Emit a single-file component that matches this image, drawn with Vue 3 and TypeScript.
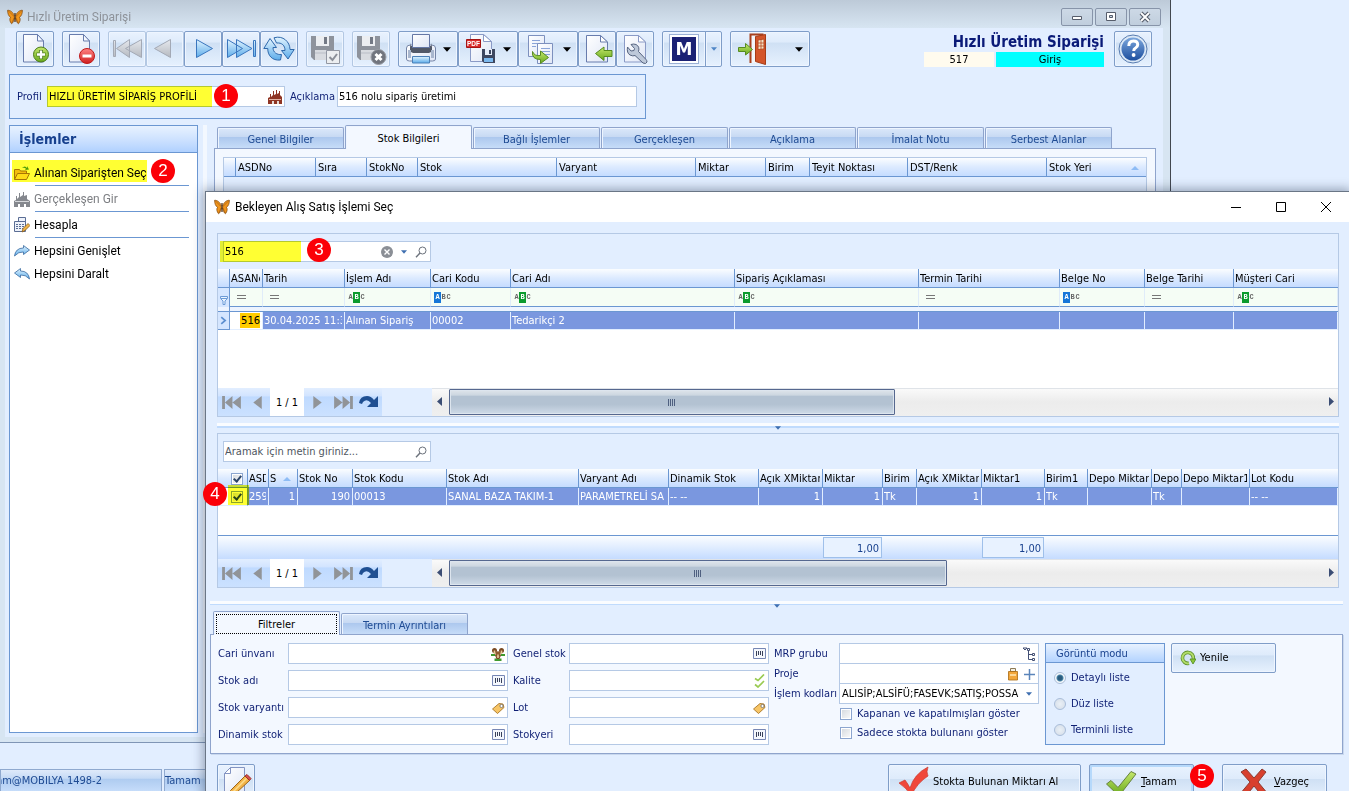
<script setup lang="ts">
import { ref } from 'vue'

interface Tool { icon: string; label: string; disabled?: boolean; menu?: boolean }
interface Column { title: string; width?: number; filter?: string; sort?: boolean }
interface Field { id: string; label: string; icon: string }

const toolGroups: Tool[][] = [
  [{ icon: 'add', label: 'Yeni' }],
  [{ icon: 'remove', label: 'Sil' }],
  [
    { icon: 'first', label: 'İlk kayıt', disabled: true },
    { icon: 'prev', label: 'Önceki kayıt', disabled: true },
    { icon: 'next', label: 'Sonraki kayıt' },
    { icon: 'last', label: 'Son kayıt' },
    { icon: 'refresh', label: 'Yenile' },
  ],
  [{ icon: 'save', label: 'Kaydet', disabled: true }],
  [{ icon: 'cancel', label: 'İptal', disabled: true }],
  [
    { icon: 'print', label: 'Yazdır', menu: true },
    { icon: 'pdf', label: 'PDF kaydet', menu: true },
    { icon: 'copy', label: 'Kopyala', menu: true },
    { icon: 'import', label: 'Aktar' },
    { icon: 'wrench', label: 'Ayarlar' },
  ],
]

const actions = [
  { icon: 'folder', label: 'Alınan Siparişten Seç', line: true, marked: true },
  { icon: 'factory-grey', label: 'Gerçekleşen Gir', line: true, disabled: true },
  { icon: 'calc', label: 'Hesapla', line: true },
  { icon: 'redo', label: 'Hepsini Genişlet' },
  { icon: 'undo', label: 'Hepsini Daralt' },
]

const mainTabs = ['Genel Bilgiler', 'Stok Bilgileri', 'Bağlı İşlemler', 'Gerçekleşen', 'Açıklama', 'İmalat Notu', 'Serbest Alanlar']
const activeTab = ref('Stok Bilgileri')

const mainColumns: Column[] = [
  { title: '', width: 12 }, { title: 'ASDNo', width: 80 }, { title: 'Sıra', width: 51 },
  { title: 'StokNo', width: 51 }, { title: 'Stok', width: 139 }, { title: 'Varyant', width: 139 },
  { title: 'Miktar', width: 70 }, { title: 'Birim', width: 44 }, { title: 'Teyit Noktası', width: 98 },
  { title: 'DST/Renk', width: 139 }, { title: 'Stok Yeri', sort: true },
]

const orderColumns: Column[] = [
  { title: 'ASANo', width: 33, filter: 'eq' }, { title: 'Tarih', width: 82, filter: 'eq' },
  { title: 'İşlem Adı', width: 86, filter: 'has' }, { title: 'Cari Kodu', width: 80, filter: 'starts' },
  { title: 'Cari Adı', width: 224, filter: 'has' }, { title: 'Sipariş Açıklaması', width: 184, filter: 'has' },
  { title: 'Termin Tarihi', width: 141, filter: 'eq' }, { title: 'Belge No', width: 85, filter: 'starts' },
  { title: 'Belge Tarihi', width: 89, filter: 'eq' }, { title: 'Müşteri Cari', filter: 'has' },
]
const orderRow = ['516', '30.04.2025 11:35', 'Alınan Sipariş', '00002', 'Tedarikçi 2', '', '', '', '', '']

const stockColumns: Column[] = [
  { title: 'ASDNo', width: 21 }, { title: 'Sıra', width: 29, sort: true }, { title: 'Stok No', width: 55 },
  { title: 'Stok Kodu', width: 94 }, { title: 'Stok Adı', width: 132 }, { title: 'Varyant Adı', width: 90 },
  { title: 'Dinamik Stok', width: 90 }, { title: 'Açık XMiktar', width: 64 }, { title: 'Miktar', width: 60 },
  { title: 'Birim', width: 34 }, { title: 'Açık XMiktar 1', width: 65 }, { title: 'Miktar1', width: 63 },
  { title: 'Birim1', width: 43 }, { title: 'Depo Miktar', width: 64 }, { title: 'Depo', width: 30 },
  { title: 'Depo Miktar1', width: 68 }, { title: 'Lot Kodu' },
]
const stockRow = ['2591', '1', '190', '00013', 'SANAL BAZA TAKIM-1', 'PARAMETRELİ SA', '-- --', '1', '1', 'Tk', '1', '1', 'Tk', '', 'Tk', '', '-- --']
const numeric = [1, 2, 7, 8, 10, 11]
const totals: Record<number, string> = { 8: '1,00', 11: '1,00' }

const leftFields: Field[] = [
  { id: 'cari', label: 'Cari ünvanı', icon: 'people' }, { id: 'stokadi', label: 'Stok adı', icon: 'barcode' },
  { id: 'varyant', label: 'Stok varyantı', icon: 'tag' }, { id: 'dinamik', label: 'Dinamik stok', icon: 'barcode' },
]
const midFields: Field[] = [
  { id: 'genel', label: 'Genel stok', icon: 'barcode' }, { id: 'kalite', label: 'Kalite', icon: 'checks' },
  { id: 'lot', label: 'Lot', icon: 'tag' }, { id: 'stokyeri', label: 'Stokyeri', icon: 'barcode' },
]
const viewModes = ['Detaylı liste', 'Düz liste', 'Terminli liste']

const profile = ref('HIZLI ÜRETİM SİPARİŞ PROFİLİ')
const note = ref('516 nolu sipariş üretimi')
const orderSearch = ref('516')
const stockSearch = ref('')
const allChecked = ref(true)
const rowChecked = ref(true)
const viewMode = ref('Detaylı liste')
const showClosed = ref(false)
const onlyStocked = ref(false)
const orderThumb = 51
const stockThumb = 57
</script>

<template>
  <div class="desktop">
    <svg class="defs" aria-hidden="true">
      <defs>
        <linearGradient id="gBlue" x1="0" y1="0" x2="0" y2="1"><stop offset="0" stop-color="#e2f4ff" /><stop offset="1" stop-color="#5cacea" /></linearGradient>
        <linearGradient id="gGrey" x1="0" y1="0" x2="0" y2="1"><stop offset="0" stop-color="#e6e9ee" /><stop offset="1" stop-color="#b5b9c0" /></linearGradient>
        <linearGradient id="gPage" x1="0" y1="0" x2="1" y2="1"><stop offset="0" stop-color="#ffffff" /><stop offset="1" stop-color="#dfe6f6" /></linearGradient>
        <linearGradient id="gGreen" x1="0" y1="0" x2="0" y2="1"><stop offset="0" stop-color="#c5e86c" /><stop offset="1" stop-color="#67a81c" /></linearGradient>
        <linearGradient id="gRed" x1="0" y1="0" x2="0" y2="1"><stop offset="0" stop-color="#ff8585" /><stop offset="1" stop-color="#cf1d1d" /></linearGradient>
        <linearGradient id="gHelp" x1="0" y1="0" x2="0" y2="1"><stop offset="0" stop-color="#7ba6dc" /><stop offset="1" stop-color="#1d4f9f" /></linearGradient>
      </defs>
      <symbol id="i-butterfly" viewBox="0 0 16 16">
        <path d="M7.500 7C6 3 3 1 .6 1.300c0 3 .9 6 3 7C2.200 9.500 2.800 13 4.600 14.800 6.200 14 7 11 7.500 9M8.500 7C10 3 13 1 15.400 1.300c0 3-.9 6-3 7C13.800 9.500 13.200 13 11.400 14.800 9.800 14 9 11 8.500 9" fill="#f0951c" stroke="#7d430a" stroke-width=".7" />
        <path d="M1 1.500L7.500 8 4.700 14M15 1.500L8.500 8l2.800 6" fill="none" stroke="#8a4a0c" stroke-width=".5" />
        <path d="M8 4v9" stroke="#4a2a0c" stroke-width="1.200" />
      </symbol>
      <symbol id="i-page" viewBox="0 0 32 32">
        <path d="M4.500 1.500h14l6 6.500v21h-20z" fill="url(#gPage)" stroke="#687cad" />
        <path d="M18.500 1.500v6.500h6z" fill="#f4f8ff" stroke="#687cad" />
      </symbol>
      <symbol id="i-add" viewBox="0 0 32 32">
        <use href="#i-page" /><circle cx="22" cy="21.500" r="7.500" fill="url(#gGreen)" stroke="#4b7d1a" /><path d="M22 17v9M17.500 21.500h9" stroke="#4b7d1a" stroke-width="4" /><path d="M22 17.500v8M18 21.500h8" stroke="#fff" stroke-width="2.400" />
      </symbol>
      <symbol id="i-remove" viewBox="0 0 32 32">
        <use href="#i-page" /><circle cx="22" cy="23" r="7.500" fill="url(#gRed)" stroke="#c01818" /><path d="M17.500 23h9" stroke="#fff" stroke-width="3" />
      </symbol>
      <symbol id="i-first" viewBox="0 0 32 32">
        <path d="M2.500 7.500h2v16h-2zM18.500 6.500v18L5.500 15.500zM30.500 6.500v18L14.500 15.500z" fill="url(#gGrey)" stroke="#a3a9b5" />
      </symbol>
      <symbol id="i-prev" viewBox="0 0 32 32"><path d="M21.500 6.500v18L5.500 15.500z" fill="url(#gGrey)" stroke="#a3a9b5" /></symbol>
      <symbol id="i-next" viewBox="0 0 32 32"><path d="M9.500 6.500v18L25.500 15.500z" fill="url(#gBlue)" stroke="#3a76be" /></symbol>
      <symbol id="i-last" viewBox="0 0 32 32">
        <path d="M28.500 7.500h2v16h-2zM2.500 6.500v18l15-9zM11.500 6.500v18l15.500-9z" fill="url(#gBlue)" stroke="#3a76be" />
      </symbol>
      <symbol id="i-refresh" viewBox="0 0 32 32">
        <path d="M.8 15.500L7 5.500l6.500 9H10c0 5 4 7.500 8.500 7l-1 5.500C9 28 4.500 22 4.800 15.500z" fill="url(#gBlue)" stroke="#2f69ab" />
        <path d="M31.200 16.500L25 26l-6.500-8.500H22c0-5-3-8-8.500-7.500L11 4.800C20 2 27 9 27 16.500z" fill="url(#gBlue)" stroke="#2f69ab" />
      </symbol>
      <symbol id="i-floppy" viewBox="0 0 32 32">
        <path d="M2 3h23v24H5l-3-3z" fill="#8e939c" /><path d="M7 3h13v10H7z" fill="#eceef1" /><path d="M15 4h3v7h-3z" fill="#737985" /><path d="M6 17h15v10H6z" fill="#d8dbe0" /><path d="M6 20h15" stroke="#b9bdc6" />
      </symbol>
      <symbol id="i-save" viewBox="0 0 32 32">
        <use href="#i-floppy" /><path d="M17.500 17.500h13v13h-13z" fill="#eceef0" stroke="#9297a2" /><path d="M20.500 24l3 3 4.500-6" fill="none" stroke="#8b8f98" stroke-width="2" />
      </symbol>
      <symbol id="i-cancel" viewBox="0 0 32 32">
        <use href="#i-floppy" /><circle cx="23.500" cy="24" r="7.500" fill="#71757e" stroke="#9a9ea6" /><path d="M20.500 21l6 6M26.500 21l-6 6" stroke="#fff" stroke-width="3" />
      </symbol>
      <symbol id="i-print" viewBox="0 0 32 32">
        <path d="M1.500 15q0-3 4-3h21q4 0 4 3v11q0 2-3 2h-23q-3 0-3-2z" fill="url(#gPage)" stroke="#7484a6" />
        <path d="M6 10q-3 9 2 10h16q5-1 2-10v3H6z" fill="#525968" /><path d="M7.500 1.500h17v13h-17z" fill="url(#gPage)" stroke="#6577a5" />
        <path d="M3 17v8h3v-8zM26 17v8h3v-8z" fill="#a9b7ce" /><path d="M7.500 23.500h17v6.500h-17z" fill="url(#gBlue)" stroke="#4d81b8" />
      </symbol>
      <symbol id="i-pdf" viewBox="0 0 32 32">
        <path d="M5.500 1.500h13l8 7v20h-21z" fill="url(#gPage)" stroke="#8a9ac6" /><path d="M18.500 1.500v7h8z" fill="#fff" stroke="#8a9ac6" />
        <path d="M1.500 6.500h14v8h-14z" fill="#d92b2b" stroke="#a31414" />
        <text x="8.500" y="13" font-family="Liberation Sans" font-size="6.500" font-weight="700" fill="#fff" text-anchor="middle">PDF</text>
        <path d="M17 16h13v14H19l-2-2z" fill="#3d4760" /><path d="M20 16h7v6h-7z" fill="#e7eefb" /><path d="M24 17h2v4h-2z" fill="#3d4760" /><path d="M19 25h9v4h-9z" fill="#7cb9ee" />
      </symbol>
      <symbol id="i-copy" viewBox="0 0 32 32">
        <path d="M3.500 2.500h16v21h-16z" fill="url(#gPage)" stroke="#7d90be" /><path d="M7 7.500h8M7 10.500h8M7 13.500h4" stroke="#8ba4d8" />
        <path d="M12.500 10.500h15v20h-15z" fill="url(#gPage)" stroke="#7d90be" /><path d="M16 15.500h9M16 18.500h9M16 21.500h9" stroke="#8ba4d8" />
        <path d="M7.500 18.500q2 5 8 4v-4.500l8 6.500-8 6v-4q-9 0-8-8z" fill="url(#gGreen)" stroke="#568b20" />
      </symbol>
      <symbol id="i-import" viewBox="0 0 32 32">
        <path d="M5.500 2.500h14l7 6.500v20h-21z" fill="url(#gPage)" stroke="#687cad" /><path d="M19.500 2.500v6.500h7z" fill="#fff" stroke="#687cad" />
        <path d="M14.500 20.500l8.500-6.500v3.500h8v6h-8v4z" fill="url(#gGreen)" stroke="#568b20" />
      </symbol>
      <symbol id="i-wrench" viewBox="0 0 32 32">
        <path d="M5.500 2.500h14l7 6.500v20h-21z" fill="url(#gPage)" stroke="#8a9ac6" /><path d="M19.500 2.500v6.500h7z" fill="#fff" stroke="#8a9ac6" />
        <path d="M12 11.500l3.500 4-.5 2-3 .5-3.500-4q-1 6 2.500 8 3 1.500 5 .5l8 7.500q3 1.500 4-1 0-1.500-1-2.500l-7.500-8q1.500-5-2.500-7-2.500-1-5 0z" fill="#bdc8d9" stroke="#566480" />
      </symbol>
      <symbol id="i-help" viewBox="0 0 32 32">
        <circle cx="16" cy="16" r="14" fill="#dbe8f6" stroke="#587cb0" /><circle cx="16" cy="16" r="11.500" fill="url(#gHelp)" />
        <path d="M11.800 13q0-5 4.600-5 4.300 0 4.300 3.700 0 2-2.200 3.300-1.800 1-1.800 3" fill="none" stroke="#fff" stroke-width="3" /><circle cx="16.600" cy="22" r="1.900" fill="#fff" />
      </symbol>
      <symbol id="i-exit" viewBox="0 0 32 32">
        <path d="M14.500 30V1.500h12V30" fill="#f3f5fa" stroke="#a8401d" stroke-width="2" /><path d="M19.500 3.500l10-2v30l-10-3z" fill="#d4552a" stroke="#a53c17" />
        <path d="M22 7l6-1v10l-6 .5z" fill="#f3e3c6" stroke="#b94a22" /><path d="M25 6.500v10M22 10h6M22 13h6" stroke="#b94a22" stroke-width=".8" />
        <path d="M2.500 14.500h7v-4l7 6-7 5.500v-3.500h-7z" fill="url(#gGreen)" stroke="#568b20" />
      </symbol>
      <symbol id="i-factory" viewBox="0 0 14 14"><path d="M0 14V8l2-1V4h1v3l2-2V1h1v4l2-1V0h1v4l2-1V1h1v4l2 2v7h-3v-3h-2v3H6v-3H4v3z" fill="#8f3524" /><path d="M1 9.500h12" stroke="#e0b0a2" /><path d="M4 11h2v3H4zM9 11h2v3H9z" fill="#e6dad6" /></symbol>
      <symbol id="i-factory-grey" viewBox="0 0 16 16"><path d="M0 16v-6l2-1V5h1v3l2-2V2h1v4l3-2V1h1v4l3-1v4l3 2v6h-4v-3h-2v3H6v-3H4v3z" fill="#85888e" /><path d="M1 10.500h14" stroke="#d5d7da" /></symbol>
      <symbol id="i-folder" viewBox="0 0 16 16"><path d="M.5 14.500v-10h5l1 1.500h6v3" fill="#f3bd3d" stroke="#a87410" /><path d="M.5 14.500L3.500 8.500h12l-3 6z" fill="#ffdb6b" stroke="#a87410" /><path d="M8 3q3-3 5 0V1l2 3.500-4 .5 1-1.200Q10.500 2 8 3z" fill="#4f9b26" /></symbol>
      <symbol id="i-calc" viewBox="0 0 16 16"><path d="M4.500.5h7v4h-7zM.5 4.500h11v10H.5z" fill="#eef2fa" stroke="#5a6d94" /><path d="M2 7.500h8M2 9.500h8M2 11.500h8" stroke="#5a6d94" stroke-dasharray="2 1" /><path d="M8 15l1-3.500 5-5 2 2-5 5z" fill="#f0b548" stroke="#8a5b17" stroke-width=".8" /></symbol>
      <symbol id="i-redo" viewBox="0 0 16 16"><path d="M.5 13q1-8 9-8V2.500L15.500 7l-6 4.500V9q-5-.5-9 4z" fill="url(#gBlue)" stroke="#39699f" stroke-width=".8" /></symbol>
      <symbol id="i-undo" viewBox="0 0 16 16"><path d="M15.500 13q-1-8-9-8V2.500L.5 7l6 4.500V9q5-.5 9 4z" fill="url(#gBlue)" stroke="#39699f" stroke-width=".8" /></symbol>
      <symbol id="i-search" viewBox="0 0 12 12"><circle cx="7.500" cy="4.500" r="3.500" fill="none" stroke="#6c727c" /><path d="M5 7L1 11.300" stroke="#6c727c" stroke-width="1.400" /></symbol>
      <symbol id="i-clear" viewBox="0 0 12 12"><circle cx="6" cy="6" r="6" fill="#8b8f96" /><path d="M3.500 3.500l5 5M8.500 3.500l-5 5" stroke="#fff" stroke-width="1.400" /></symbol>
      <symbol id="i-down" viewBox="0 0 7 4"><path d="M0 0h7L3.500 4z" fill="currentColor" /></symbol>
      <symbol id="i-funnel" viewBox="0 0 8 9"><path d="M.5.5h7v2L5 5v3.500H3V5L.5 2.500z" fill="#e9f3ff" stroke="#6d9bd6" /><path d="M1 2.500h6" stroke="#6d9bd6" /></symbol>
      <symbol id="i-people" viewBox="0 0 14 14"><path d="M3.500 11.500h7v2.500h-7zM0 7h4v2H0zM10 7h4v2h-4z" fill="#3f9a2e" /><circle cx="3.500" cy="3.500" r="2.500" fill="#7a4a22" /><circle cx="10.500" cy="3.500" r="2.500" fill="#7a4a22" /><circle cx="7" cy="7" r="2.700" fill="#8f5c30" /><path d="M2.700 3.500h1.600V7H2.700zM9.700 3.500h1.600V7H9.700zM6.200 7.500h1.600v4H6.200z" fill="#e9c79a" /><path d="M4.500 8l1.500 3.500h2L9.500 8" fill="none" stroke="#7a4a22" stroke-width="1.200" /></symbol>
      <symbol id="i-barcode" viewBox="0 0 14 14"><path d="M1.500 1.500h12v10h-12z" fill="#f4f7fd" stroke="#7787b4" /><path d="M4.500 4v5M6.500 4v4M8.500 4v4M10.500 4v5" stroke="#39415a" /></symbol>
      <symbol id="i-tag" viewBox="0 0 14 14"><path d="M1.500 8L8 2.500l4 .5 1 3.500-6.500 6z" fill="#f7c566" stroke="#a06a16" stroke-width=".8" /><circle cx="10.500" cy="5" r="1.600" fill="#fff" stroke="#6b6b6b" stroke-width=".8" /></symbol>
      <symbol id="i-checks" viewBox="0 0 14 14"><path d="M3 4.500l3 2 6-6M3 10.500l3 2.500 6-6" fill="none" stroke="#9acb52" stroke-width="1.700" /></symbol>
      <symbol id="i-tree" viewBox="0 0 14 14"><path d="M1 1h4L3 3zM5.500 1.500h2v2h-2zM10.500 6.500h2v2h-2zM10.500 11.500h2v2h-2z" fill="#fff" stroke="#424f74" /><path d="M6.500 4v8.500H10M6.500 7.500H10" fill="none" stroke="#424f74" /></symbol>
      <symbol id="i-jar" viewBox="0 0 14 14"><path d="M4.500 1.500h5v3h-5z" fill="#f5efe3" stroke="#8d7b56" /><path d="M2.500 4.500h9v8.500h-9z" fill="#f2a63a" stroke="#a86a12" stroke-width=".8" /><path d="M4 8h6" stroke="#fdd795" stroke-width="2" /></symbol>
      <symbol id="i-plus" viewBox="0 0 14 14"><path d="M7.500 2v11M2 7.500h11" stroke="#5b85ba" stroke-width="1.500" /></symbol>
      <symbol id="i-spin" viewBox="0 0 16 16"><path d="M13.300 9A5.500 5.500 0 1 0 9 13.300" fill="none" stroke="#5d8f2a" stroke-width="3.600" /><path d="M13.300 9A5.500 5.500 0 1 0 9 13.300" fill="none" stroke="#b2dc6a" stroke-width="2" /><path d="M10 9h6l-3 5z" fill="#8cc53a" stroke="#4f8a1a" stroke-width=".8" /></symbol>
      <symbol id="i-pfirst" viewBox="0 0 20 16"><path d="M0 1h3v14H0zM11 1v14L3 8zM20 1v14L11 8z" fill="#919498" /></symbol>
      <symbol id="i-plast" viewBox="0 0 20 16"><path d="M17 1h3v14h-3zM9 1v14l8-7zM0 1v14l9-7z" fill="#919498" /></symbol>
      <symbol id="i-pprev" viewBox="0 0 9 16"><path d="M9 1v14L0 8z" fill="#919498" /></symbol>
      <symbol id="i-pnext" viewBox="0 0 9 16"><path d="M0 1v14l9-7z" fill="#919498" /></symbol>
      <symbol id="i-pgo" viewBox="0 0 20 14"><path d="M0 8Q1 1 8 1q4 0 7 4l4-4v11H8l4-4Q8 3 4 7l-1 2z" fill="#1f4f92" /></symbol>
      <symbol id="i-left" viewBox="0 0 6 10"><path d="M5 0v9L0 4.500z" fill="#3b4d74" /></symbol>
      <symbol id="i-right" viewBox="0 0 6 10"><path d="M1 0v9l5-4.500z" fill="#3b4d74" /></symbol>
      <symbol id="i-edit" viewBox="0 0 32 32"><path d="M10.500 1.500h14v28h-20v-22z" fill="url(#gPage)" stroke="#8394c2" /><path d="M10.500 1.500v6h-6z" fill="#fff" stroke="#8394c2" /><path d="M8 31l2.500-6.500L25 10l4.500 4.500L15 28z" fill="#f3b448" stroke="#9a6516" /><path d="M12 27L26.500 12.500" stroke="#fbdc8c" stroke-width="1.500" /><path d="M25 10l2-1.500 4 4-1.500 2z" fill="#d8504a" stroke="#9b2f2b" /></symbol>
      <symbol id="i-redcheck" viewBox="0 0 32 32"><path d="M1 17l6-3q3 4 5 8Q16 8 30 1q-2 5 0 9Q19 17 13 30q-4-8-12-13z" fill="#f0473a" stroke="#c9382d" stroke-width=".7" /></symbol>
      <symbol id="i-okcheck" viewBox="0 0 32 32"><path d="M1.500 18l4.500-3.500 7 7L26 5.500l5 2.500-17 22z" fill="url(#gGreen)" stroke="#66803f" /></symbol>
      <symbol id="i-cross" viewBox="0 0 32 32"><path d="M3 6l5-3 8 9 8-9 4 3-8 10 10 12-5 3-9-11-9 11-5-3 10-12z" fill="#d8402e" stroke="#8d3a30" /></symbol>
    </svg>

    <section class="main-window">
      <header class="title-bar">
        <svg class="ic16"><use href="#i-butterfly" /></svg>
        <span>Hızlı Üretim Siparişi</span>
        <div class="frame-buttons">
          <button type="button" aria-label="Küçült"><svg class="ic14" viewBox="0 0 14 14"><path d="M2.500 6.500h9v3h-9z" fill="#fff" stroke="#565d6b" /></svg></button>
          <button type="button" aria-label="Büyüt"><svg class="ic14" viewBox="0 0 14 14"><path d="M2.500 2.500h9v8h-9zM5.500 5.500v2h3v-2z" fill="#fff" fill-rule="evenodd" stroke="#565d6b" /></svg></button>
          <button type="button" aria-label="Kapat"><svg class="ic14" viewBox="0 0 14 14"><path d="M3 3l8 8M11 3l-8 8" stroke="#565d6b" stroke-width="4" /><path d="M3 3l8 8M11 3l-8 8" stroke="#fff" stroke-width="1.800" /></svg></button>
        </div>
      </header>

      <div class="main-body">
        <div class="toolbar">
          <div v-for="(group, g) in toolGroups" :key="g" class="tool-group">
            <button v-for="t in group" :key="t.icon" type="button" class="tool" :class="{ wide: t.menu, off: t.disabled }" :disabled="t.disabled" :aria-label="t.label">
              <svg class="ic32"><use :href="'#i-' + t.icon" /></svg>
              <svg v-if="t.menu" class="caret"><use href="#i-down" /></svg>
            </button>
          </div>
          <div class="tool-group">
            <button type="button" class="tool logo-tool" aria-label="M"><span class="logo">M</span></button>
            <button type="button" class="tool logo-menu" aria-label="M menüsü"><svg class="caret small"><use href="#i-down" /></svg></button>
          </div>
          <button type="button" class="tool exit" aria-label="Çıkış">
            <svg class="ic32"><use href="#i-exit" /></svg>
            <svg class="caret"><use href="#i-down" /></svg>
          </button>
          <div class="doc-info">
            <h1>Hızlı Üretim Siparişi</h1>
            <div class="doc-state"><span class="doc-no">517</span><span class="doc-mode">Giriş</span></div>
          </div>
          <button type="button" class="tool" aria-label="Yardım"><svg class="ic32"><use href="#i-help" /></svg></button>
        </div>

        <div class="profile">
          <label for="profil">Profil</label>
          <div class="field profile-field">
            <input id="profil" v-model="profile" type="text">
            <svg class="ic14"><use href="#i-factory" /></svg>
            <span class="marker" /><span class="badge">1</span>
          </div>
          <label for="aciklama">Açıklama</label>
          <div class="field note-field"><input id="aciklama" v-model="note" type="text"></div>
        </div>

        <div class="workspace">
          <aside class="side">
            <h2>İşlemler</h2>
            <ul>
              <li v-for="a in actions" :key="a.label" :class="{ line: a.line }">
                <button type="button" :disabled="a.disabled"><svg class="ic16"><use :href="'#i-' + a.icon" /></svg>{{ a.label }}</button>
                <template v-if="a.marked"><span class="marker" /><span class="badge">2</span></template>
              </li>
            </ul>
          </aside>
          <div class="v-split" />
          <div class="pages">
            <div class="tabs">
              <button v-for="t in mainTabs" :key="t" type="button" class="tab" :class="{ active: t === activeTab }" @click="activeTab = t">{{ t }}</button>
            </div>
            <div class="page">
              <div class="main-grid">
                <table>
                  <colgroup><col v-for="c in mainColumns" :key="c.title" :style="{ width: c.width ? c.width + 'px' : 'auto' }"></colgroup>
                  <thead><tr><th v-for="c in mainColumns" :key="c.title"><span class="head"><span>{{ c.title }}</span><i v-if="c.sort" class="sort" /></span></th></tr></thead>
                </table>
              </div>
            </div>
          </div>
        </div>
      </div>
    </section>

    <footer class="status"><span class="status-user"><span>am@MOBILYA 1498-2</span></span><span class="status-text">Tamam</span></footer>

    <section class="dialog">
      <header class="dialog-title">
        <svg class="ic16"><use href="#i-butterfly" /></svg>
        <span>Bekleyen Alış Satış İşlemi Seç</span>
        <div class="dialog-buttons">
          <button type="button" aria-label="Küçült"><svg class="ic12" viewBox="0 0 12 12"><path d="M1 6.500h10" stroke="#000" /></svg></button>
          <button type="button" aria-label="Büyüt"><svg class="ic12" viewBox="0 0 12 12"><path d="M1.500 1.500h9v9h-9z" fill="none" stroke="#000" /></svg></button>
          <button type="button" aria-label="Kapat"><svg class="ic12" viewBox="0 0 12 12"><path d="M1 1l10 10M11 1L1 11" stroke="#000" /></svg></button>
        </div>
      </header>

      <div class="dialog-body">
        <div class="grid-box orders">
          <div class="search field">
            <input v-model="orderSearch" type="text" aria-label="Sipariş ara">
            <button type="button" aria-label="Temizle"><svg class="ic12"><use href="#i-clear" /></svg></button>
            <button type="button" aria-label="Geçmiş"><svg class="caret tiny"><use href="#i-down" /></svg></button>
            <button type="button" aria-label="Ara"><svg class="ic12"><use href="#i-search" /></svg></button>
            <span class="marker" /><span class="badge">3</span>
          </div>
          <table>
            <colgroup><col class="indicator-col"><col v-for="c in orderColumns" :key="c.title" :style="{ width: c.width ? c.width + 'px' : 'auto' }"></colgroup>
            <thead>
              <tr><th /><th v-for="c in orderColumns" :key="c.title"><span class="head"><span>{{ c.title }}</span></span></th></tr>
              <tr class="filter-row">
                <th class="indicator"><svg class="funnel"><use href="#i-funnel" /></svg></th>
                <td v-for="c in orderColumns" :key="c.title">
                  <i v-if="c.filter === 'eq'" class="eq" />
                  <span v-else class="abc" :class="c.filter"><b>A</b><b>B</b><b>C</b></span>
                </td>
              </tr>
              <tr class="spacer-row"><th /><td :colspan="orderColumns.length" /></tr>
            </thead>
            <tbody>
              <tr class="selected">
                <th class="indicator"><svg class="row-arrow" viewBox="0 0 6 8"><path d="M1 1l3.500 3L1 7" fill="none" stroke="#5c8fd0" stroke-width="1.500" /></svg></th>
                <td v-for="(v, i) in orderRow" :key="i" :class="{ focus: i === 0 }"><mark v-if="i === 0">{{ v }}</mark><span v-else class="head"><span>{{ v }}</span></span></td>
              </tr>
            </tbody>
          </table>
          <div class="blank" />
          <div class="pager-row">
            <div class="pager">
              <button type="button" aria-label="İlk"><svg class="p20"><use href="#i-pfirst" /></svg></button>
              <button type="button" aria-label="Önceki"><svg class="p9"><use href="#i-pprev" /></svg></button>
              <span class="pages-count">1 / 1</span>
              <button type="button" aria-label="Sonraki"><svg class="p9"><use href="#i-pnext" /></svg></button>
              <button type="button" aria-label="Son"><svg class="p20"><use href="#i-plast" /></svg></button>
              <button type="button" aria-label="Git"><svg class="p20 go"><use href="#i-pgo" /></svg></button>
            </div>
            <div class="scroll">
              <svg class="arrow"><use href="#i-left" /></svg>
              <div class="track"><div class="thumb" :style="{ width: orderThumb + '%' }"><i class="grip" /></div></div>
              <svg class="arrow"><use href="#i-right" /></svg>
            </div>
          </div>
        </div>

        <div class="h-split"><svg class="caret tiny"><use href="#i-down" /></svg></div>

        <div class="grid-box stocks">
          <div class="search field">
            <input v-model="stockSearch" type="text" aria-label="Stok ara" placeholder="Aramak için metin giriniz...">
            <button type="button" aria-label="Ara"><svg class="ic12"><use href="#i-search" /></svg></button>
          </div>
          <table>
            <colgroup><col class="check-col"><col v-for="c in stockColumns" :key="c.title" :style="{ width: c.width ? c.width + 'px' : 'auto' }"></colgroup>
            <thead>
              <tr>
                <th class="check-cell"><input v-model="allChecked" type="checkbox" class="check" aria-label="Tümünü seç"></th>
                <th v-for="c in stockColumns" :key="c.title"><span class="head"><span>{{ c.title }}</span><i v-if="c.sort" class="sort" /></span></th>
              </tr>
            </thead>
            <tbody>
              <tr class="selected">
                <td class="check-cell plain"><input v-model="rowChecked" type="checkbox" class="check" aria-label="Satırı seç"></td>
                <td v-for="(v, i) in stockRow" :key="i" :class="{ num: numeric.includes(i) }"><span class="head"><span>{{ v }}</span></span></td>
              </tr>
            </tbody>
          </table>
          <span class="marker" /><span class="badge">4</span>
          <div class="blank" />
          <table class="totals">
            <colgroup><col class="check-col"><col v-for="c in stockColumns" :key="c.title" :style="{ width: c.width ? c.width + 'px' : 'auto' }"></colgroup>
            <tbody><tr><td /><td v-for="(c, i) in stockColumns" :key="c.title"><span v-if="totals[i]">{{ totals[i] }}</span></td></tr></tbody>
          </table>
          <div class="pager-row">
            <div class="pager">
              <button type="button" aria-label="İlk"><svg class="p20"><use href="#i-pfirst" /></svg></button>
              <button type="button" aria-label="Önceki"><svg class="p9"><use href="#i-pprev" /></svg></button>
              <span class="pages-count">1 / 1</span>
              <button type="button" aria-label="Sonraki"><svg class="p9"><use href="#i-pnext" /></svg></button>
              <button type="button" aria-label="Son"><svg class="p20"><use href="#i-plast" /></svg></button>
              <button type="button" aria-label="Git"><svg class="p20 go"><use href="#i-pgo" /></svg></button>
            </div>
            <div class="scroll">
              <svg class="arrow"><use href="#i-left" /></svg>
              <div class="track"><div class="thumb" :style="{ width: stockThumb + '%' }"><i class="grip" /></div></div>
              <svg class="arrow"><use href="#i-right" /></svg>
            </div>
          </div>
        </div>

        <div class="h-split low"><svg class="caret tiny"><use href="#i-down" /></svg></div>

        <div class="filters">
          <div class="tabs">
            <button type="button" class="tab active"><span class="focus-ring">Filtreler</span></button>
            <button type="button" class="tab">Termin Ayrıntıları</button>
          </div>
          <div class="filter-page">
            <div class="form-col left">
              <div v-for="f in leftFields" :key="f.id" class="form-row">
                <label :for="f.id">{{ f.label }}</label>
                <div class="field"><input :id="f.id" type="text"><svg class="ic14"><use :href="'#i-' + f.icon" /></svg></div>
              </div>
            </div>
            <div class="form-col mid">
              <div v-for="f in midFields" :key="f.id" class="form-row">
                <label :for="f.id">{{ f.label }}</label>
                <div class="field"><input :id="f.id" type="text"><svg class="ic14"><use :href="'#i-' + f.icon" /></svg></div>
              </div>
            </div>
            <div class="form-col tight">
              <div class="form-row"><label for="mrp">MRP grubu</label><div class="field"><input id="mrp" type="text"><svg class="ic14"><use href="#i-tree" /></svg></div></div>
              <div class="form-row"><label for="proje">Proje</label><div class="field"><input id="proje" type="text"><svg class="ic14"><use href="#i-jar" /></svg><svg class="ic14"><use href="#i-plus" /></svg></div></div>
              <div class="form-row">
                <label for="kodlar">İşlem kodları</label>
                <div class="field select-field"><select id="kodlar"><option>ALISİP;ALSİFÜ;FASEVK;SATIŞ;POSSA</option></select><svg class="caret tiny"><use href="#i-down" /></svg></div>
              </div>
              <label class="check-row"><input v-model="showClosed" type="checkbox" class="check">Kapanan ve kapatılmışları göster</label>
              <label class="check-row"><input v-model="onlyStocked" type="checkbox" class="check">Sadece stokta bulunanı göster</label>
            </div>
            <fieldset class="modes">
              <legend>Görüntü modu</legend>
              <label v-for="m in viewModes" :key="m"><input v-model="viewMode" type="radio" name="mode" :value="m">{{ m }}</label>
            </fieldset>
            <button type="button" class="btn refresh"><svg class="ic16"><use href="#i-spin" /></svg>Yenile</button>
          </div>
        </div>

        <div class="dialog-actions">
          <button type="button" class="btn edit" aria-label="Düzenle"><svg class="ic32"><use href="#i-edit" /></svg></button>
          <button type="button" class="btn take"><svg class="ic32"><use href="#i-redcheck" /></svg>Stokta Bulunan Miktarı Al</button>
          <div class="ok-wrap">
            <button type="button" class="btn ok"><svg class="ic32"><use href="#i-okcheck" /></svg><span><u>T</u>amam</span></button>
            <span class="badge">5</span>
          </div>
          <button type="button" class="btn cancel"><svg class="ic32"><use href="#i-cross" /></svg><span><u>V</u>azgeç</span></button>
        </div>
      </div>
    </section>
  </div>
</template>

<style>
html, body { margin: 0; background: #e2eeff; }
</style>

<style scoped>
* { box-sizing: border-box; }
.desktop { position: relative; height: 100vh; overflow: hidden; background: #e2eeff; color: #000; font: 11px/14px "DejaVu Sans Condensed", "Noto Sans", sans-serif; }
button, input, select { font: inherit; color: inherit; margin: 0; }
button { padding: 0; border: 0; background: none; }
ul { list-style: none; margin: 0; padding: 0; }
h1, h2 { margin: 0; }
svg { flex: none; display: block; }
.defs { position: absolute; width: 0; height: 0; }
.ic32 { width: 32px; height: 32px; }
.ic16 { width: 16px; height: 16px; }
.ic14 { width: 14px; height: 14px; }
.ic12 { width: 12px; height: 12px; }
.caret { width: 8px; height: 5px; color: #000; }
.caret.small { color: #4f86c6; width: 6px; height: 4px; }
.caret.tiny { color: #3f6fb0; width: 6px; height: 4px; }
.marker { position: absolute; background: #ffff33; mix-blend-mode: multiply; pointer-events: none; }
.badge { position: absolute; z-index: 2; width: 24px; height: 24px; border-radius: 12px; background: #fb0007; color: #fff; font: 17px/23px "Liberation Sans", Arial, sans-serif; text-align: center; pointer-events: none; }

/* main window */
.main-window { position: absolute; left: 0; right: 178px; top: 0; height: 743px; display: flex; flex-direction: column; padding: 0 7px 5px 5px; background: #d7e5f2; border-right: 1px solid #42474f; border-bottom: 1px solid #7f95b5; }
.title-bar { display: flex; align-items: center; gap: 4px; height: 28px; margin: 0 -7px 0 -5px; padding: 5px 9px 0 7px; background: linear-gradient(#bdcad8, #d7e5f2); color: #8d9299; font: 12px/16px Roboto, "Noto Sans", sans-serif; }
.frame-buttons { display: flex; gap: 2px; margin-left: auto; }
.frame-buttons button { display: flex; align-items: center; justify-content: center; width: 32px; height: 18px; border: 1px solid #8794a9; border-radius: 2px; background: linear-gradient(#cdd9e6, #c0cedd); }
.main-body { flex: 1; display: flex; flex-direction: column; padding: 3px 0 4px 4px; background: #e2eeff; }
.toolbar { display: flex; gap: 8px; height: 36px; padding: 0 11px 0 7px; }
.tool-group { display: flex; }
.tool { display: flex; align-items: center; justify-content: center; gap: 4px; width: 38px; height: 36px; border: 1px solid #7f9dc8; border-radius: 2px; background: linear-gradient(#e9f2fe, #deebfb 30%, #cfe0f4 32%, #e6f1fe); box-shadow: inset 0 0 0 1px #eef5ff; }
.tool.off { border-color: #b3c8e3; }
.tool.wide { width: 60px; gap: 6px; }
.logo-tool { width: 44px; border-radius: 2px 0 0 2px; }
.logo-menu { width: 17px; margin-left: -1px; border-radius: 0 2px 2px 0; }
.logo { width: 28px; height: 28px; border: 2px solid #fff; outline: 1px solid #9bb0d5; background: #1b2174; color: #fff; font: 900 17px/24px "DejaVu Sans", sans-serif; text-align: center; }
.exit { width: 80px; justify-content: flex-start; padding: 0 6px 0 5px; }
.exit .caret { margin-left: auto; }
.doc-info { display: flex; flex-direction: column; width: 180px; margin-left: auto; }
.doc-info h1 { height: 21px; color: #0a1a78; font: 700 15px/23px "DejaVu Sans Condensed", "Noto Sans", sans-serif; text-align: right; white-space: nowrap; }
.doc-state { display: flex; gap: 2px; text-align: center; line-height: 16px; height: 15px; }
.doc-no { width: 70px; background: #fffbee; }
.doc-mode { flex: 1; background: #00ffff; }
.doc-info + .tool { margin-left: 2px; }

.field { position: relative; display: flex; align-items: center; height: 21px; border: 1px solid #b5c9e5; background: #fff; }
.field input { flex: 1; min-width: 0; height: 19px; padding: 0 0 0 1px; border: 0; outline: 0; background: transparent; color: #000; }
.field > svg { margin-right: 2px; }
label { color: #0e1f74; white-space: nowrap; }
.profile { display: flex; align-items: center; align-self: flex-start; width: 637px; height: 45px; margin-top: 7px; padding: 0 8px 0 7px; border: 1px solid #6b97d2; }
.profile label:first-child { width: 30px; }
.profile-field { width: 238px; margin-right: 5px; }
.profile-field .marker { left: -1px; top: -1px; width: 165px; height: 21px; }
.profile-field .badge { left: 166px; top: -3px; }
.note-field { width: 300px; margin-left: auto; }

.workspace { flex: 1; display: flex; margin-top: 6px; padding-right: 7px; }
.side { width: 189px; border: 1px solid #6b97d2; background: #fff; }
.side h2 { height: 27px; padding-left: 9px; border-bottom: 1px solid #6b97d2; background: linear-gradient(#e8f2ff, #c9dfff 60%, #b0d1ff); color: #17408e; font: 700 14px/26px "DejaVu Sans Condensed", "Noto Sans", sans-serif; }
.side ul { padding: 9px 8px 0 4px; }
.side li { position: relative; height: 23px; }
.side li.line { height: 26px; padding-bottom: 3px; }
.side li.line::after { content: ""; position: absolute; left: 21px; right: 0; bottom: 2px; height: 1px; background: #6b97d2; }
.side li button { display: flex; align-items: center; gap: 4px; width: 100%; height: 22px; font: 12px/24px Roboto, "Noto Sans", sans-serif; white-space: nowrap; }
.side li button:disabled { color: #7d7f83; }
.side li .marker { left: -2px; top: -2px; width: 135px; height: 22px; }
.side li .badge { left: 137px; top: -3px; }
.v-split { width: 4px; margin: 0 7px 0 5px; background: #f3f8ff; }
.pages { flex: 1; display: flex; flex-direction: column; min-width: 0; }
.tabs { display: flex; align-items: flex-end; gap: 1px; height: 23px; padding-left: 3px; }
.tab { width: 127px; height: 21px; padding-top: 3px; border: 1px solid #8fa4cc; border-bottom: 0; border-radius: 2px 2px 0 0; background: linear-gradient(#dbe8fa, #c7d9f3 45%, #adc8ee 47%, #c6dcf8); box-shadow: inset 1px 1px 0 #eef5ff; color: #1f4b93; }
.tab.active { position: relative; height: 24px; margin-bottom: -1px; padding-top: 2px; background: #f3f8ff; color: #000; }
.page { flex: 1; display: flex; padding: 8px; border: 1px solid #8fa4cc; background: #f3f8ff; }
.main-grid { flex: 1; min-width: 0; border: 1px solid #b5c9e5; background: #e2eeff; }

table { width: 100%; border-collapse: separate; border-spacing: 0; table-layout: fixed; }
th, td { height: 18px; padding: 0 2px 0 1px; overflow: hidden; font-weight: 400; text-align: left; white-space: nowrap; line-height: 17px; }
thead th { height: 19px; border-right: 1px solid #6b97d2; border-bottom: 1px solid #6b97d2; background: linear-gradient(#fbfdff, #dceaff 50%, #c5dcff); line-height: 17px; }
thead .head { padding-top: 1px; }
th:last-child, td:last-child { border-right: 0; }
.main-grid th { padding-left: 2px; }
.head { display: flex; align-items: center; justify-content: space-between; }
.head > span { min-width: 0; overflow: hidden; }
.num .head { justify-content: flex-end; }
.sort { flex: none; margin: 0 4px 0 6px; border: 4px solid transparent; border-top: 0; border-bottom: 4px solid #8ebcf5; }
.main-grid .sort { margin-right: 5px; }

.status { position: absolute; left: 0; right: 0; bottom: 0; display: flex; gap: 2px; height: 22px; color: #1f4b93; font-size: 11px; line-height: 22px; }
.status > span { border: 1px solid #8fa9cf; border-bottom: 0; background: linear-gradient(#dfeafa, #c5daf5 40%, #aecbf0 42%, #c5dcfa); overflow: hidden; white-space: nowrap; }
.status-user { display: flex; justify-content: flex-end; width: 162px; padding-right: 59px; }
.status-text { flex: 1; }

/* dialog */
.dialog { position: absolute; left: 205px; right: 0; top: 191px; display: flex; flex-direction: column; border-left: 1px solid #6a7686; border-top: 1px solid #6a7686; background: #e2eeff; box-shadow: 0 0 10px 2px rgba(30, 45, 70, .4); }
.dialog-title { display: flex; align-items: center; gap: 5px; height: 30px; padding: 0 1px 0 8px; background: #fff; font: 12px/16px Roboto, "Noto Sans", sans-serif; }
.dialog-buttons { display: flex; margin-left: auto; }
.dialog-buttons button { display: flex; align-items: center; justify-content: center; width: 45px; height: 28px; }
.dialog-body { padding: 11px 6px 0 4px; }
.grid-box { position: relative; display: flex; flex-direction: column; margin: 0 4px 0 7px; border: 1px solid #b5c9e5; }
.orders { height: 184px; }
.stocks { height: 155px; }
.search { width: 208px; margin: 7px 0 7px 5px; flex: none; }
.search button { display: flex; align-items: center; justify-content: center; width: 17px; height: 19px; }
.search button:last-of-type { margin-right: 1px; }
.orders .search .marker { left: -4px; top: -1px; width: 81px; height: 21px; }
.search input::placeholder { color: #4e5560; opacity: 1; }
.search .badge { left: 83px; top: -4px; }
.indicator-col { width: 12px; }
.check-col { width: 30px; }
.filter-row td { border-right: 1px solid #e0ecf9; border-bottom: 1px solid #6b97d2; background: #f5fdf5; height: 19px; padding-left: 3px; }
.indicator { padding: 0; background: #d5e6ff; border-right: 1px solid #6b97d2; border-bottom: 1px solid #6b97d2; }
.funnel { width: 8px; height: 9px; margin: 5px auto 0; }
.row-arrow { width: 7px; height: 9px; margin: 0 auto; }
.spacer-row th, .spacer-row td { height: 5px; padding: 0; line-height: 1px; border-bottom: 1px solid #6b97d2; background: #edf4ff; }
.filter-row .indicator { border-bottom: 0; height: 19px; padding: 0; }
.eq { display: block; width: 9px; height: 4px; margin-left: 4px; border: 1px solid #777; border-left: 0; border-right: 0; }
.abc { display: flex; align-items: center; width: 18px; font: 700 7px/11px "Liberation Mono", monospace; color: #666; }
.abc b { width: 5px; text-align: center; }
.abc.has b:nth-child(2) { width: 7px; background: #0b9b2d; color: #fff; }
.abc.starts b:nth-child(1) { width: 7px; background: #1676d8; color: #fff; }
.selected td { border-right: 1px solid #e2eeff; border-bottom: 1px solid #e2eeff; background: #7a97df; color: #fff; height: 18px; }
.selected td.focus { background: #fff; text-align: right; }
mark { padding: 1px 0 1px 1px; background: #ffcc00; color: #000; }
.blank { flex: 1; background: #fff; }
.pager-row { display: flex; flex: none; height: 28px; }
.pager { display: flex; width: 164px; margin-right: 50px; background: linear-gradient(#e2eeff 0, #d2e4ff 28%, #bfdaff 32%, #cbe1ff); }
.pager button { display: flex; align-items: center; justify-content: center; width: 26px; }
.pager .p20 { width: 19px; height: 15px; }
.pager .p20.go { width: 20px; height: 14px; }
.pager .p9 { width: 9px; height: 15px; }
.pages-count { width: 34px; background: #fff; line-height: 29px; text-align: center; }
.scroll { flex: 1; display: flex; align-items: flex-start; background: linear-gradient(#fbfbfb, #ececec 50%, #efefef); box-shadow: inset 0 1px 0 #dfe3e8; }
.arrow { width: 6px; height: 10px; margin: 9px 4px 0 5px; }
.arrow:first-child { margin-right: 6px; }
.track { flex: 1; display: flex; height: 26px; margin-top: 1px; }
.thumb { display: flex; align-items: center; justify-content: center; border: 1px solid #56688f; border-radius: 1px; background: linear-gradient(#dfe5eb, #ccd6e0 22%, #b3c2d2 25%, #b3c2d2 60%, #cfdbe8); box-shadow: inset 0 0 0 1px #dde5ee; }
.grip { width: 8px; height: 7px; background: repeating-linear-gradient(90deg, #4f6080 0 1px, transparent 1px 2px); }
.h-split { display: flex; justify-content: center; height: 5px; margin: 6px 4px 5px 7px; border-top: 3px solid #fafcff; border-bottom: 2px solid #c0dbfd; }
.h-split.low { height: 4px; margin: 13px 0 6px; border-bottom-width: 1px; }

.stocks .check-cell { padding: 0; text-align: right; }
.check-cell .check { margin: 3px 4px 0 0; }
.selected td.plain { border-right-color: #6b97d2; background: #fff; }
.stocks > .marker { left: 10px; top: 51px; width: 21px; height: 20px; }
.stocks > .badge { left: -15px; top: 48px; }
.totals { flex: none; border-top: 1px solid #6b97d2; background: linear-gradient(#fbfdff, #c5dcff); }
.totals td { height: 23px; padding: 0; }
.totals span { display: block; height: 21px; margin-right: 1px; padding-right: 2px; border: 1px solid #9fc0ea; background: #e8f2ff; color: #17408e; line-height: 21px; text-align: right; }

.check { appearance: none; flex: none; display: inline-flex; align-items: center; justify-content: center; width: 12px; height: 12px; border: 1px solid #8ba5cf; background: linear-gradient(135deg, #d3d8de, #fbfbfb); box-shadow: inset 0 0 0 1px #fff; vertical-align: top; }
.check:checked::before { content: ""; width: 3px; height: 6px; margin-top: -2px; border: solid #2b4468; border-width: 0 2px 2px 0; transform: rotate(40deg); }

.filter-page { display: flex; height: 120px; padding: 8px 7px 0 7px; border: 1px solid #8fa4cc; background: #f3f8ff; box-shadow: 1px 1px 0 #c9d8ee; }
.filters .tab.active { width: 127px; padding: 2px; }
.filters .focus-ring { display: block; height: 20px; border: 1px dotted #000; line-height: 19px; }
.form-col { display: flex; flex-direction: column; gap: 6px; }
.form-row { display: flex; align-items: center; }
.form-row label { line-height: 20px; }
.form-row .field { margin-left: auto; }
.left { width: 290px; margin-right: 5px; }
.left .field { width: 220px; }
.mid { width: 256px; margin-right: 5px; }
.mid .field { width: 200px; }
.tight { width: 265px; gap: 0; margin-right: 6px; }
.tight .field { width: 200px; }
.tight .form-row + .form-row { margin-top: -1px; }
.field select { appearance: none; width: 182px; height: 19px; padding: 1px 0 0 2px; border: 0; background: transparent; outline: 0; overflow: hidden; }
.select-field .caret { margin: 0 6px 0 auto; }
.check-row { display: flex; align-items: center; gap: 5px; height: 19px; margin-left: 66px; }
.modes { align-self: flex-start; display: flex; flex-direction: column; width: 120px; height: 102px; margin: 0 6px 0 0; padding: 0; border: 1px solid #6b97d2; background: #e2eeff; }
.modes legend { float: left; width: 100%; height: 19px; padding: 0 0 0 10px; border-bottom: 1px solid #6b97d2; background: linear-gradient(#e8f2ff, #b3d3ff); color: #17408e; line-height: 20px; }
.modes label { display: flex; align-items: center; gap: 5px; height: 26px; padding-left: 8px; }
.modes legend + label { margin-top: 2px; }
.modes input { appearance: none; width: 12px; height: 12px; border: 1px solid #a9bdd9; border-radius: 6px; background: radial-gradient(#eaf0f6, #d3dce8); }
.modes input:checked { background: radial-gradient(#2a5d80 0 2px, #4d86a8 3px, #f6fafd 4px); }
.btn { display: flex; align-items: center; border: 1px solid #7f9dc8; border-radius: 2px; background: linear-gradient(#e9f2fe, #deebfb 40%, #cfe0f4 42%, #e6f1fe); box-shadow: inset 0 0 0 1px #eef5ff; white-space: nowrap; }
.refresh { width: 105px; height: 30px; gap: 4px; padding-left: 8px; }
.dialog-actions { display: flex; margin: 10px 16px 10px 7px; }
.dialog-actions .btn { height: 36px; }
.edit { width: 38px; justify-content: center; }
.take { width: 193px; margin-left: auto; padding-left: 9px; gap: 3px; }
.ok-wrap { position: relative; margin: 0 28px 0 8px; }
.ok { width: 105px; padding-left: 15px; gap: 4px; }
.dialog-actions .ok { box-shadow: inset 0 0 0 2px #b6d9fb; }
.ok-wrap .badge { left: 101px; top: 0; }
.cancel { width: 105px; padding-left: 15px; gap: 4px; }
</style>
